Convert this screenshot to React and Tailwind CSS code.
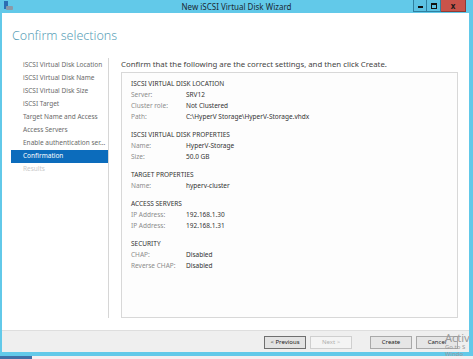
import React from 'react'

const NAV = [
  { label: 'iSCSI Virtual Disk Location' },
  { label: 'iSCSI Virtual Disk Name' },
  { label: 'iSCSI Virtual Disk Size' },
  { label: 'iSCSI Target' },
  { label: 'Target Name and Access' },
  { label: 'Access Servers' },
  { label: 'Enable authentication ser...' },
  { label: 'Confirmation', active: true },
  { label: 'Results', disabled: true },
]

const SECTIONS = [
  {
    title: 'ISCSI VIRTUAL DISK LOCATION',
    rows: [
      ['Server:', 'SRV12'],
      ['Cluster role:', 'Not Clustered'],
      ['Path:', 'C:\\HyperV Storage\\HyperV-Storage.vhdx'],
    ],
  },
  {
    title: 'ISCSI VIRTUAL DISK PROPERTIES',
    rows: [
      ['Name:', 'HyperV-Storage'],
      ['Size:', '50.0 GB'],
    ],
  },
  {
    title: 'TARGET PROPERTIES',
    rows: [['Name:', 'hyperv-cluster']],
  },
  {
    title: 'ACCESS SERVERS',
    rows: [
      ['IP Address:', '192.168.1.30'],
      ['IP Address:', '192.168.1.31'],
    ],
  },
  {
    title: 'SECURITY',
    rows: [
      ['CHAP:', 'Disabled'],
      ['Reverse CHAP:', 'Disabled'],
    ],
  },
]

function TitleBar() {
  return (
    <div className="h-[13px] w-full flex items-start shrink-0">
      {/* window icon */}
      <div className="w-[60px] shrink-0 h-full pl-[3px] pt-[1px]">
        <div className="relative w-[10px] h-[10px]">
          <div className="absolute left-[1px] top-0 w-[4px] h-[8px] bg-[#2c6fb3]" />
          <div className="absolute left-[3px] top-[5px] w-[7px] h-[4px] bg-[#8a9aa8] rounded-[1px]" />
        </div>
      </div>
      <div className="flex-1 min-w-0 h-full flex items-center justify-center text-[8px] leading-none text-[#1b2a33] whitespace-nowrap">
        New iSCSI Virtual Disk Wizard
      </div>
      {/* window controls */}
      <div className="w-[60px] shrink-0 h-[12px] flex justify-start pl-[0px]">
        <div className="w-[14px] shrink-0 h-[12px] bg-[#5cc2e3] border border-t-0 border-[#2f7f9f] flex items-end justify-center pb-[3px]">
          <div className="w-[5px] h-[2px] bg-[#111]" />
        </div>
        <div className="w-[14px] shrink-0 h-[12px] bg-[#5cc2e3] border border-t-0 border-l-0 border-[#2f7f9f] flex items-center justify-center">
          <div className="w-[6px] h-[6px] border border-t-2 border-[#111]" />
        </div>
        <div className="w-[25px] shrink-0 h-[12px] bg-[#c9534a] border border-t-0 border-l-0 border-[#8f3a34] flex items-center justify-center text-[8px] font-bold leading-none text-[#1a1a1a]">
          x
        </div>
      </div>
    </div>
  )
}

function Footer() {
  const base = 'w-[42px] h-[13px] flex items-center justify-center text-[6px] leading-none border'
  return (
    <div className="h-[22px] shrink-0 bg-[#efefef] border-t border-[#dedede] flex items-center justify-end pr-[11px] pt-[1px]">
      <button className={`${base} bg-[#e3e3e3] border-[#6f6f6f] text-[#222]`}>&lt; Previous</button>
      <button className={`${base} ml-[4px] bg-[#f4f4f4] border-[#cfcfcf] text-[#b0b0b0]`}>Next &gt;</button>
      <button className={`${base} ml-[18px] bg-[#e6e6e6] border-[#a9a9a9] text-[#222]`}>Create</button>
      <button className={`${base} ml-[4px] bg-[#e6e6e6] border-[#a9a9a9] text-[#222]`}>Cancel</button>
    </div>
  )
}

export default function App() {
  return (
    <div
      className="relative w-[473px] h-[359px] bg-[#62c9e9] flex flex-col overflow-hidden"
      style={{ fontFamily: '"Noto Sans", "Open Sans", sans-serif' }}
    >
      <TitleBar />

      <div className="flex-1 ml-[2px] mr-[4px] bg-white flex flex-col min-h-0">
        <div className="h-[45px] shrink-0 pl-[10px] pt-[14px] text-[12.5px] leading-[18px] font-light text-[#5a9fb8]">
          Confirm selections
        </div>

        <div className="h-[260px] shrink-0 flex">
          {/* left nav */}
          <div className="w-[107px] shrink-0 border-r border-[#d6d6d6] pt-[1px] pl-[9px]">
            {NAV.map((item) => (
              <div
                key={item.label}
                className={`h-[13px] flex items-center pl-[12px] text-[6.5px] leading-none whitespace-nowrap ${
                  item.active
                    ? 'bg-[#0c6cbc] text-white'
                    : item.disabled
                    ? 'text-[#c9c9c9]'
                    : 'text-[#6a6a6a]'
                }`}
              >
                {item.label}
              </div>
            ))}
          </div>

          {/* right content */}
          <div className="flex-1 flex flex-col pl-[12px] pr-[11px]">
            <div className="h-[14px] shrink-0 flex items-center text-[7.8px] leading-none text-[#444] whitespace-nowrap">
              Confirm that the following are the correct settings, and then click Create.
            </div>
            <div className="flex-1 border border-[#d8d8d8] bg-[#fdfdfd] pt-[6px] pl-[9px] flex flex-col gap-[7px]">
              {SECTIONS.map((sec) => (
                <div key={sec.title} className="flex flex-col">
                  <div className="h-[11px] flex items-center text-[6.5px] leading-none text-[#333]">
                    {sec.title}
                  </div>
                  {sec.rows.map(([k, v], i) => (
                    <div key={i} className="h-[11px] flex items-center text-[6.5px] leading-none whitespace-nowrap">
                      <span className="w-[55px] shrink-0 text-[#8c8c8c]">{k}</span>
                      <span className="text-[#333]">{v}</span>
                    </div>
                  ))}
                </div>
              ))}
            </div>
          </div>
        </div>

        <div className="h-[12px] shrink-0" />
        <Footer />
      </div>

      {/* bottom frame + taskbar edge */}
      <div className="h-[4px] shrink-0" />
      <div className="h-[3px] shrink-0 flex">
        <div className="w-[32px] bg-[#3f6fa6]" />
        <div className="flex-1 bg-[#f4eef0]" />
      </div>

      {/* activation watermark */}
      <div className="absolute left-[445px] top-[332px] flex flex-col leading-none text-[#9a9a9a] pointer-events-none whitespace-nowrap">
        <span className="text-[11px]">Activ</span>
        <span className="text-[6px] mt-[1px]">Go to S</span>
        <span className="text-[6px] mt-[1px]">Windo</span>
      </div>
    </div>
  )
}
